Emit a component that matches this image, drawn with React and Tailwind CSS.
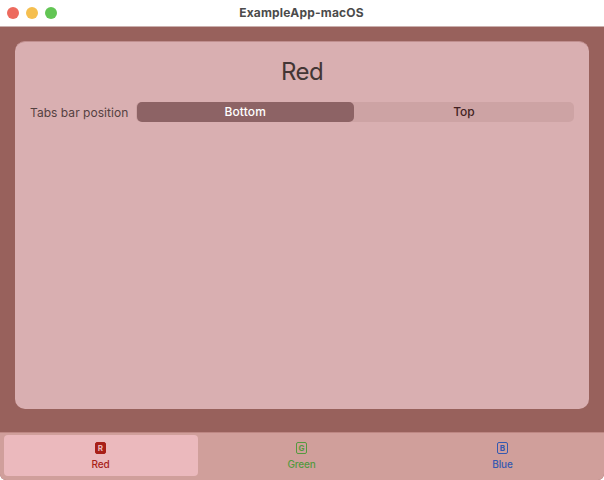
function LetterIcon({ letter, filled }) {
  return (
    <span
      className={`flex h-[12px] w-[11px] items-center justify-center rounded-[2px] border border-current ${
        filled ? "bg-[#a81f18]" : ""
      }`}
    >
      <span
        className={`text-[8px] leading-none font-bold ${filled ? "text-[#ebb9bd]" : ""}`}
      >
        {letter}
      </span>
    </span>
  );
}

function Tab({ letter, label, color, selected }) {
  return (
    <button
      className={`flex h-full min-w-0 flex-col items-center rounded-[4px] pt-[7px] pr-[1px] ${color} ${
        selected ? "bg-[#ebb9bd]" : ""
      }`}
    >
      <LetterIcon letter={letter} filled={selected} />
      <span className="mt-[3px] text-[10px] leading-[14px] font-medium tracking-[-0.15px]">
        {label}
      </span>
    </button>
  );
}

export default function App() {
  return (
    <div className="h-[480px] w-[604px] overflow-hidden bg-white font-['Inter',sans-serif]">
      <div className="flex h-full flex-col overflow-hidden rounded-b-[6px] bg-[#98615c]">
        <header className="grid h-[27px] shrink-0 grid-cols-[1fr_auto_1fr] items-center border-b border-[#cbb0ae] bg-white">
          <div className="flex gap-[7px] pl-[7px]">
            <span className="h-3 w-3 rounded-full bg-[#ed6a5e]" />
            <span className="h-3 w-3 rounded-full bg-[#f5bf4f]" />
            <span className="h-3 w-3 rounded-full bg-[#62c554]" />
          </div>
          <h1 className="pr-[1px] text-[12px] leading-[26px] font-bold tracking-[0.2px] whitespace-nowrap text-[#4b4b4b]">
            ExampleApp-macOS
          </h1>
        </header>

        <main className="mx-[15px] mt-[14px] flex h-[368px] shrink-0 flex-col rounded-[10px] border-t border-[#c08f8f] bg-[#d9afb1]">
          <h2 className="mt-[14px] text-center text-[24px] leading-[32px] tracking-[-0.6px] text-[#433635]">
            Red
          </h2>
          <div className="mt-[14px] flex items-start pr-[15px] pl-[15px]">
            <span className="w-[106px] shrink-0 pt-[1px] text-[12px] leading-[20px] tracking-[0.04px] whitespace-nowrap text-[#554141]">
              Tabs bar position
            </span>
            <div className="flex h-[20px] flex-1 rounded-[5px] bg-[#cda3a4] pl-[0.5px] text-[12px] leading-[20px] font-medium">
              <button className="h-[20px] w-[217.5px] rounded-[5px] bg-[#8d6365] tracking-[0.15px] text-white">
                Bottom
              </button>
              <button className="flex-1 text-[#431f22]">Top</button>
            </div>
          </div>
        </main>

        <nav className="mt-auto grid h-[48px] grid-cols-3 gap-[7px] border-t border-[#bd8783] bg-[#d09f9b] px-[4px] pt-[2px] pb-[4px]">
          <Tab letter="R" label="Red" color="text-[#a81f18]" selected />
          <Tab letter="G" label="Green" color="text-[#54993f]" />
          <Tab letter="B" label="Blue" color="text-[#3559b0]" />
        </nav>
      </div>
    </div>
  );
}
